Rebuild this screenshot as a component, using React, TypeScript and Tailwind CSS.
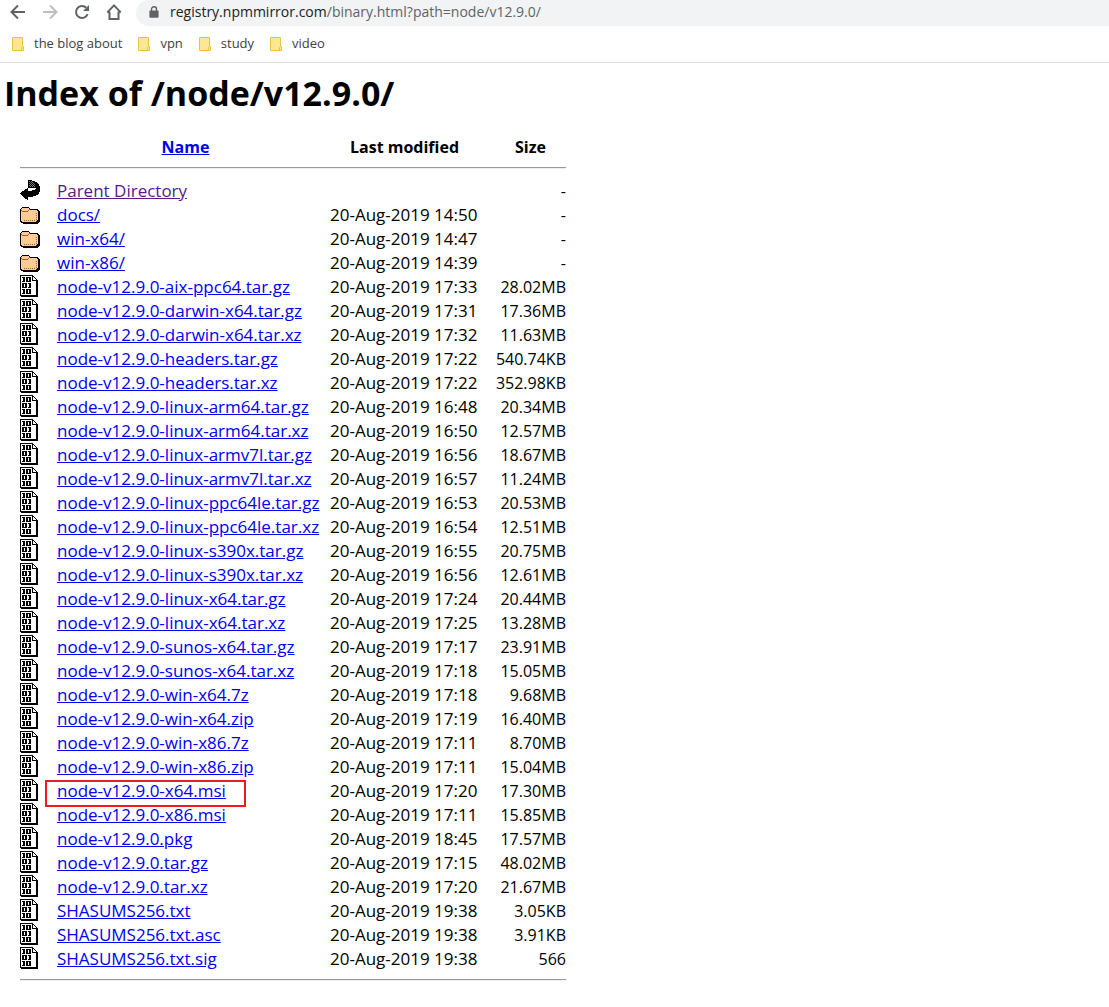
import { ReactNode } from 'react';

type EntryKind = 'parent' | 'folder' | 'binary';

interface Entry {
  kind: EntryKind;
  name: string;
  modified: string;
  size: string;
  marked?: boolean;
}

const file = (name: string, time: string, size: string, marked = false): Entry => ({
  kind: 'binary',
  name,
  modified: `20-Aug-2019 ${time}`,
  size,
  marked,
});

const folder = (name: string, time: string): Entry => ({
  kind: 'folder',
  name,
  modified: `20-Aug-2019 ${time}`,
  size: '-',
});

const entries: Entry[] = [
  { kind: 'parent', name: 'Parent Directory', modified: '', size: '-' },
  folder('docs/', '14:50'),
  folder('win-x64/', '14:47'),
  folder('win-x86/', '14:39'),
  file('node-v12.9.0-aix-ppc64.tar.gz', '17:33', '28.02MB'),
  file('node-v12.9.0-darwin-x64.tar.gz', '17:31', '17.36MB'),
  file('node-v12.9.0-darwin-x64.tar.xz', '17:32', '11.63MB'),
  file('node-v12.9.0-headers.tar.gz', '17:22', '540.74KB'),
  file('node-v12.9.0-headers.tar.xz', '17:22', '352.98KB'),
  file('node-v12.9.0-linux-arm64.tar.gz', '16:48', '20.34MB'),
  file('node-v12.9.0-linux-arm64.tar.xz', '16:50', '12.57MB'),
  file('node-v12.9.0-linux-armv7l.tar.gz', '16:56', '18.67MB'),
  file('node-v12.9.0-linux-armv7l.tar.xz', '16:57', '11.24MB'),
  file('node-v12.9.0-linux-ppc64le.tar.gz', '16:53', '20.53MB'),
  file('node-v12.9.0-linux-ppc64le.tar.xz', '16:54', '12.51MB'),
  file('node-v12.9.0-linux-s390x.tar.gz', '16:55', '20.75MB'),
  file('node-v12.9.0-linux-s390x.tar.xz', '16:56', '12.61MB'),
  file('node-v12.9.0-linux-x64.tar.gz', '17:24', '20.44MB'),
  file('node-v12.9.0-linux-x64.tar.xz', '17:25', '13.28MB'),
  file('node-v12.9.0-sunos-x64.tar.gz', '17:17', '23.91MB'),
  file('node-v12.9.0-sunos-x64.tar.xz', '17:18', '15.05MB'),
  file('node-v12.9.0-win-x64.7z', '17:18', '9.68MB'),
  file('node-v12.9.0-win-x64.zip', '17:19', '16.40MB'),
  file('node-v12.9.0-win-x86.7z', '17:11', '8.70MB'),
  file('node-v12.9.0-win-x86.zip', '17:11', '15.04MB'),
  file('node-v12.9.0-x64.msi', '17:20', '17.30MB', true),
  file('node-v12.9.0-x86.msi', '17:11', '15.85MB'),
  file('node-v12.9.0.pkg', '18:45', '17.57MB'),
  file('node-v12.9.0.tar.gz', '17:15', '48.02MB'),
  file('node-v12.9.0.tar.xz', '17:20', '21.67MB'),
  file('SHASUMS256.txt', '19:38', '3.05KB'),
  file('SHASUMS256.txt.asc', '19:38', '3.91KB'),
  file('SHASUMS256.txt.sig', '19:38', '566'),
];

const bookmarks = ['the blog about', 'vpn', 'study', 'video'];

const BackIcon = () => (
  <svg width="16" height="16" viewBox="0 0 16 16" fill="none" stroke="#5f6368" strokeWidth="2">
    <path d="M15 8H2.5M8 1.5L1.5 8L8 14.5" />
  </svg>
);

const ForwardIcon = () => (
  <svg width="16" height="16" viewBox="0 0 16 16" fill="none" stroke="#bcbec0" strokeWidth="2">
    <path d="M1 8H13.5M8 1.5L14.5 8L8 14.5" />
  </svg>
);

const ReloadIcon = () => (
  <svg width="16" height="16" viewBox="0 0 16 16">
    <path d="M13.6 10.2A6 6 0 1 1 12.3 3.8" fill="none" stroke="#5f6368" strokeWidth="2" />
    <path d="M15 1V7H9Z" fill="#5f6368" />
  </svg>
);

const HomeIcon = () => (
  <svg width="16" height="18" viewBox="0 0 16 18" fill="none" stroke="#5f6368" strokeWidth="2">
    <path d="M3.5 8.5V16H12.5V8.5" />
    <path d="M1.6 9.3H3.5M12.5 9.3H14.4M1.3 9.4L8 2.4L14.7 9.4" />
  </svg>
);

const LockIcon = () => (
  <svg width="10" height="12" viewBox="0 0 10 12" className="shrink-0">
    <path d="M2.5 5V3.2a2.5 2.5 0 0 1 5 0V5" fill="none" stroke="#5f6368" strokeWidth="1.4" />
    <rect x="0.4" y="4.4" width="9.2" height="7.4" rx="1" fill="#5f6368" />
  </svg>
);

const BookmarkFolderIcon = () => (
  <svg width="13" height="15" viewBox="0 0 13 15" className="shrink-0">
    <path d="M1.5 0.5H11.5V9.5H12.5V13.5H1.5Z" fill="#ffe694" stroke="#e9c440" />
    <path d="M10.5 13.5V10.5L11.5 9.5" fill="none" stroke="#e9c440" />
  </svg>
);

const ParentIcon = () => (
  <svg width="20" height="22" viewBox="0 0 20 22" shapeRendering="crispEdges">
    <path
      d="M8 1H12V2H15V3H17V4H18V5H19V7H20V13H19V15H18V16H16V17H13V18H8V21H7V20H5V19H4V18H3V17H2V16H1V15H0V14H1V13H2V12H4V11H5V10H7V9H8V12H12V11H15V10H16V9H8Z"
      fill="#000"
    />
    <path
      d="M9 2h1v1H9zM11 2h1v1h-1zM10 3h1v1h-1zM12 3h1v1h-1zM9 4h1v1H9zM11 4h1v1h-1zM13 4h1v1h-1zM10 5h1v1h-1zM12 5h1v1h-1zM14 5h1v1h-1zM9 6h1v1H9zM11 6h1v1h-1zM13 6h1v1h-1zM10 7h1v1h-1zM12 7h1v1h-1zM14 7h1v1h-1z"
      fill="#777777"
    />
  </svg>
);

const FolderIcon = () => (
  <svg width="20" height="22" viewBox="0 0 20 22" shapeRendering="crispEdges">
    <path d="M2 4H9V5H10V6H18V7H19V8H20V19H19V20H18V21H3V20H1V19H0V6H1V5H2Z" fill="#000" />
    <path d="M2 5H9V6H10V7H17V8H18V17H17V18H16V19H2V18H1V6H2Z" fill="#ffcc99" />
    <path d="M2 8H8V7H9V6H10V7H9V8H8V9H2V8H1V7H2Z" fill="#996633" />
    <path
      d="M4 17h1v1H4zM6 17h1v1H6zM8 17h1v1H8zM10 17h1v1h-1zM12 17h1v1h-1zM14 17h1v1h-1zM16 16h1v1h-1zM16 14h1v1h-1zM16 12h1v1h-1zM16 10h1v1h-1z"
      fill="#996633"
    />
  </svg>
);

const BinaryIcon = () => (
  <svg width="20" height="22" viewBox="0 0 20 22" shapeRendering="crispEdges">
    <path d="M0 0H13V1H14V2H15V3H16V4H17V5H18V22H1V21H0Z" fill="#000" />
    <path d="M1 1H12V6H16V20H1Z" fill="#fff" />
    <path d="M13 2H14V3H15V4H16V5H13Z" fill="#fff" />
    {/* page marks, three rows */}
    <path
      d="M2 2H5V7H2V6H3V3H2ZM6 2H11V7H6ZM2 8H7V13H2ZM8 8H11V13H8V12H9V9H8ZM2 14H5V19H2V18H3V15H2ZM6 14H11V19H6Z"
      fill="#000"
    />
    <path d="M8 3h1v3H8zM4 9h1v3H4zM8 15h1v3H8z" fill="#fff" />
  </svg>
);

const entryIcons: Record<EntryKind, ReactNode> = {
  parent: <ParentIcon />,
  folder: <FolderIcon />,
  binary: <BinaryIcon />,
};

const BrowserBar = () => (
  <header className="border-b border-[#dadce0]">
    <div className="flex h-[26px] items-start">
      <nav className="flex h-6 items-center gap-4 pl-[10px] pr-[14px]">
        <button type="button" aria-label="Back"><BackIcon /></button>
        <button type="button" aria-label="Forward"><ForwardIcon /></button>
        <button type="button" aria-label="Reload"><ReloadIcon /></button>
        <button type="button" aria-label="Home"><HomeIcon /></button>
      </nav>
      <div className="flex h-[26px] min-w-0 flex-1 items-center gap-[11px] rounded-l-[14px] bg-[#f1f3f4] pb-[2px] pl-[13px]">
        <LockIcon />
        <button type="button" className="truncate text-left text-sm text-[#202124]">
          registry.npmmirror.com<span className="text-[#5f6368]">/binary.html?path=node/v12.9.0/</span>
        </button>
      </div>
    </div>
    <nav className="flex h-9 items-center gap-[15px] pl-[11px]">
      {bookmarks.map((label) => (
        <a key={label} href="#" className="flex items-center gap-[10px] text-[13px] text-[#3c4043]">
          <BookmarkFolderIcon />
          {label}
        </a>
      ))}
    </nav>
  </header>
);

const Rule = () => <hr className="h-[2px] border-t border-b border-t-[#9a9a9a] border-b-[#eeeeee]" />;

const EntryRow = ({ entry }: { entry: Entry }) => (
  <tr className="h-6">
    <td className="pb-[2px]">{entryIcons[entry.kind]}</td>
    <td className="relative">
      <a href="#" className={entry.kind === 'parent' ? 'text-[#551a8b] underline' : 'text-[#0000ee] underline'}>
        {entry.name}
      </a>
      {entry.marked && (
        <span className="pointer-events-none absolute -left-3 top-[1px] h-[27px] w-[201px] border-2 border-[#ed1c24]" />
      )}
    </td>
    <td>{entry.modified}</td>
    <td className="text-right text-[16px] leading-6">{entry.size}</td>
  </tr>
);

export default function App() {
  return (
    <div className="min-h-screen bg-white font-['Open_Sans','Noto_Sans',sans-serif] text-black">
      <BrowserBar />
      <main className="px-1 pt-2 pb-6">
        <h1 className="text-[34px] leading-[44px] font-bold">Index of /node/v12.9.0/</h1>
        <table className="mt-5 ml-4 w-[546px] table-fixed text-[17px] leading-6 whitespace-nowrap">
          <colgroup>
            <col className="w-[37px]" />
            <col className="w-[273px]" />
            <col className="w-[165px]" />
            <col className="w-[71px]" />
          </colgroup>
          <thead className="text-[16px]">
            <tr className="h-6">
              <td />
              <th className="pr-4"><a href="#" className="text-[#0000ee] underline">Name</a></th>
              <th className="pr-4">Last modified</th>
              <th>Size</th>
            </tr>
            <tr>
              <td colSpan={4} className="pt-2 pb-[10px]"><Rule /></td>
            </tr>
          </thead>
          <tbody>
            {entries.map((entry) => (
              <EntryRow key={entry.name} entry={entry} />
            ))}
          </tbody>
          <tfoot>
            <tr>
              <td colSpan={4} className="pt-2"><Rule /></td>
            </tr>
          </tfoot>
        </table>
      </main>
    </div>
  );
}
